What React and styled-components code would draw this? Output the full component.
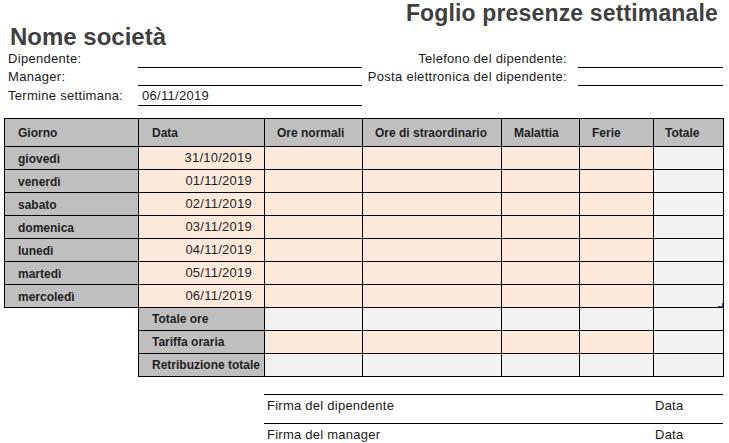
import React from 'react'
import { styled, createGlobalStyle } from 'styled-components'

const GlobalStyle = createGlobalStyle`
  body {
    margin: 0;
    background: #fff;
    font-family: "Liberation Sans", Arial, sans-serif;
    color: #1a1a1a;
  }
`

const Page = styled.div`
  width: 729px;
  height: 443px;
  padding-top: 1px;
  box-sizing: border-box;
  overflow: hidden;
`

const SheetTitle = styled.h1`
  margin: 0;
  padding-right: 11px;
  text-align: right;
  font-size: 23px;
  line-height: 24px;
  font-weight: 700;
  letter-spacing: 0.15px;
  color: #3f3f3f;
`

const CompanyName = styled.h2`
  margin: 0;
  padding-left: 10px;
  font-size: 24px;
  line-height: 24px;
  font-weight: 700;
  color: #3f3f3f;
`

const InfoGrid = styled.div`
  display: grid;
  grid-template-columns: 130px 224px 216px 145px;
  margin: 1px 0 0 8px;
  font-size: 13px;
  letter-spacing: 0.3px;
`

const InfoLabel = styled.div`
  height: ${(props) => props.h || '17px'};
  line-height: ${(props) => props.h || '17px'};
  text-align: ${(props) => props.align || 'left'};
  padding-right: ${(props) => (props.align === 'right' ? '11px' : '0')};
  white-space: nowrap;
`

const InfoLine = styled.div`
  height: ${(props) => props.h || '17px'};
  line-height: ${(props) => props.h || '17px'};
  border-bottom: 1px solid #000;
  padding-left: 4px;
`

const Spacer = styled.div``

const Table = styled.table`
  margin: 12px 0 0 4px;
  width: 719px;
  border-collapse: collapse;
  table-layout: fixed;
  font-size: 12px;
  font-weight: 700;
`

const Head = styled.th`
  background: #bfbfbf;
  border: 1px solid #000;
  height: 27px;
  padding: 0 0 0 ${(props) => props.pl || '12px'};
  text-align: left;
  font-weight: 700;
  color: #1f1f1f;
`

const Cell = styled.td`
  position: relative;
  background: ${(props) => props.bg || '#fce9da'};
  border: 1px solid #000;
  height: ${(props) => props.h || '22px'};
  padding: ${(props) => props.pt || '0'} ${(props) => props.pr || '0'} ${(props) => props.pb || '0'} ${(props) => props.pl || '0'};
  text-align: ${(props) => props.align || 'left'};
  font-weight: ${(props) => props.weight || 700};
  font-size: ${(props) => props.size || '12px'};
  letter-spacing: ${(props) => (props.weight === 400 ? '0.25px' : '0')};
  color: #1f1f1f;
`

const EmptyCell = styled.td`
  border: none;
  background: #fff;
`

const ResizeMark = styled.svg`
  position: absolute;
  right: 0;
  bottom: 0;
`

const Signatures = styled.div`
  margin: 17px 0 0 264px;
  width: 459px;
  font-size: 13px;
  letter-spacing: 0.25px;
`

const SignRow = styled.div`
  display: grid;
  grid-template-columns: 388px 1fr;
  border-top: 1px solid #000;
  height: ${(props) => props.h || '29px'};
  padding: 3px 0 0 3px;
  box-sizing: border-box;
`

const PEACH = '#fce9da'
const GRAY = '#bfbfbf'
const LIGHT = '#f2f2f2'

const days = [
  ['giovedì', '31/10/2019'],
  ['venerdì', '01/11/2019'],
  ['sabato', '02/11/2019'],
  ['domenica', '03/11/2019'],
  ['lunedì', '04/11/2019'],
  ['martedì', '05/11/2019'],
  ['mercoledì', '06/11/2019'],
]

const summary = [
  ['Totale ore', LIGHT],
  ['Tariffa oraria', PEACH],
  ['Retribuzione totale', LIGHT],
]

const App = () => {
  return (
    <Page>
      <GlobalStyle />
      <SheetTitle>Foglio presenze settimanale</SheetTitle>
      <CompanyName>Nome società</CompanyName>

      <InfoGrid>
        <InfoLabel>Dipendente:</InfoLabel>
        <InfoLine />
        <InfoLabel align="right">Telefono del dipendente:</InfoLabel>
        <InfoLine />

        <InfoLabel>Manager:</InfoLabel>
        <InfoLine />
        <InfoLabel align="right">Posta elettronica del dipendente:</InfoLabel>
        <InfoLine />

        <InfoLabel h="19px">Termine settimana:</InfoLabel>
        <InfoLine h="19px">06/11/2019</InfoLine>
        <Spacer />
        <Spacer />
      </InfoGrid>

      <Table>
        <colgroup>
          <col style={{ width: 134 }} />
          <col style={{ width: 126 }} />
          <col style={{ width: 98 }} />
          <col style={{ width: 139 }} />
          <col style={{ width: 78 }} />
          <col style={{ width: 74 }} />
          <col style={{ width: 70 }} />
        </colgroup>
        <thead>
          <tr>
            <Head pl="13px">Giorno</Head>
            <Head pl="13px">Data</Head>
            <Head>Ore normali</Head>
            <Head>Ore di straordinario</Head>
            <Head>Malattia</Head>
            <Head>Ferie</Head>
            <Head pl="11px">Totale</Head>
          </tr>
        </thead>
        <tbody>
          {days.map(([day, date], i) => (
            <tr key={day}>
              <Cell bg={GRAY} pl="13px" pt="2px" h="20px">{day}</Cell>
              <Cell align="right" pr="12px" pb="2px" h="20px" weight={400} size="13px">{date}</Cell>
              <Cell />
              <Cell />
              <Cell />
              <Cell />
              <Cell bg={LIGHT}>
                {i === days.length - 1 && (
                  <ResizeMark width="5" height="4" viewBox="0 0 5 4">
                    <path d="M4 0h1v4H0V3h4z" fill="#3b4ea3" />
                  </ResizeMark>
                )}
              </Cell>
            </tr>
          ))}
          {summary.map(([label, bg], i) => (
            <tr key={label}>
              <EmptyCell />
              <Cell bg={GRAY} pl="13px" h={i === 0 ? '22px' : '21px'}>{label}</Cell>
              <Cell bg={bg} />
              <Cell bg={bg} />
              <Cell bg={bg} />
              <Cell bg={bg} />
              <Cell bg={LIGHT} />
            </tr>
          ))}
        </tbody>
      </Table>

      <Signatures>
        <SignRow>
          <span>Firma del dipendente</span>
          <span>Data</span>
        </SignRow>
        <SignRow>
          <span>Firma del manager</span>
          <span>Data</span>
        </SignRow>
      </Signatures>
    </Page>
  )
}

export default App
